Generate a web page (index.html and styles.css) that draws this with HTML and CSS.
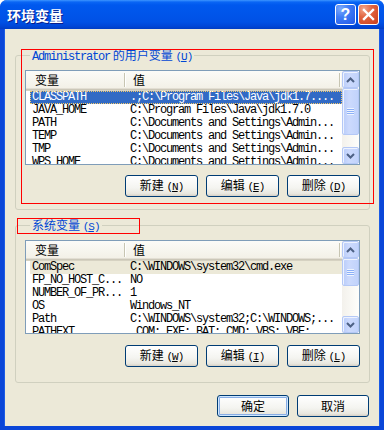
FILE: index.html
```html
<!DOCTYPE html>
<html lang="zh-CN">
<head>
<meta charset="utf-8">
<title>环境变量</title>
<link rel="stylesheet" href="styles.css">
</head>
<body>
<div class="window">
  <div class="titlebar">
    <span class="title">环境变量</span>
    <div class="tb-buttons">
      <span class="tb-btn help">?</span>
      <span class="tb-btn close"><svg width="21" height="21" viewBox="0 0 21 21"><path d="M6 6 L15 15 M15 6 L6 15" stroke="#fff" stroke-width="2.4" stroke-linecap="square" fill="none"/></svg></span>
    </div>
  </div>
  <div class="frame">
    <fieldset class="group group-user">
      <legend><span class="mono">Administrator</span> 的用户变量 <span class="mn">(<u>U</u>)</span></legend>
      <div class="list list-user">
        <div class="list-main">
          <div class="list-header">
            <div class="hcell hname">变量</div>
            <span class="sep"></span>
            <div class="hcell hvalue">值</div>
            <span class="sep sep-end"></span>
          </div>
          <div class="rows">
            <div class="row selected"><span class="cell name">CLASSPATH</span><span class="cell value">.;C:\Program Files\Java\jdk1.7....</span></div>
            <div class="row"><span class="cell name">JAVA_HOME</span><span class="cell value">C:\Program Files\Java\jdk1.7.0</span></div>
            <div class="row"><span class="cell name">PATH</span><span class="cell value">C:\Documents and Settings\Admin...</span></div>
            <div class="row"><span class="cell name">TEMP</span><span class="cell value">C:\Documents and Settings\Admin...</span></div>
            <div class="row"><span class="cell name">TMP</span><span class="cell value">C:\Documents and Settings\Admin...</span></div>
            <div class="row"><span class="cell name">WPS_HOME</span><span class="cell value">C:\Documents and Settings\Admin...</span></div>
          </div>
        </div>
        <div class="scrollbar">
          <div class="sb-btn"><svg width="9" height="6" viewBox="0 0 9 6"><path d="M1 5 L4.5 1.5 L8 5" stroke="#4D6185" stroke-width="2" fill="none"/></svg></div>
          <div class="sb-thumb thumb-user"><span class="grip"></span></div>
          <div class="sb-track"></div>
          <div class="sb-btn"><svg width="9" height="6" viewBox="0 0 9 6"><path d="M1 1 L4.5 4.5 L8 1" stroke="#4D6185" stroke-width="2" fill="none"/></svg></div>
        </div>
      </div>
      <div class="btn-row">
        <button class="btn">新建 <span class="mn">(<u>N</u>)</span></button>
        <button class="btn">编辑 <span class="mn">(<u>E</u>)</span></button>
        <button class="btn">删除 <span class="mn">(<u>D</u>)</span></button>
      </div>
    </fieldset>

    <fieldset class="group group-sys">
      <legend>系统变量 <span class="mn">(<u>S</u>)</span></legend>
      <div class="list list-sys">
        <div class="list-main">
          <div class="list-header">
            <div class="hcell hname">变量</div>
            <span class="sep"></span>
            <div class="hcell hvalue">值</div>
            <span class="sep sep-end"></span>
          </div>
          <div class="rows">
            <div class="row inactive"><span class="cell name">ComSpec</span><span class="cell value">C:\WINDOWS\system32\cmd.exe</span></div>
            <div class="row"><span class="cell name">FP_NO_HOST_C...</span><span class="cell value">NO</span></div>
            <div class="row"><span class="cell name">NUMBER_OF_PR...</span><span class="cell value">1</span></div>
            <div class="row"><span class="cell name">OS</span><span class="cell value">Windows_NT</span></div>
            <div class="row"><span class="cell name">Path</span><span class="cell value">C:\WINDOWS\system32;C:\WINDOWS;...</span></div>
            <div class="row"><span class="cell name">PATHEXT</span><span class="cell value">.COM;.EXE;.BAT;.CMD;.VBS;.VBE;...</span></div>
          </div>
        </div>
        <div class="scrollbar">
          <div class="sb-btn"><svg width="9" height="6" viewBox="0 0 9 6"><path d="M1 5 L4.5 1.5 L8 5" stroke="#4D6185" stroke-width="2" fill="none"/></svg></div>
          <div class="sb-thumb thumb-sys"><span class="grip"></span></div>
          <div class="sb-track"></div>
          <div class="sb-btn"><svg width="9" height="6" viewBox="0 0 9 6"><path d="M1 1 L4.5 4.5 L8 1" stroke="#4D6185" stroke-width="2" fill="none"/></svg></div>
        </div>
      </div>
      <div class="btn-row">
        <button class="btn">新建 <span class="mn">(<u>W</u>)</span></button>
        <button class="btn">编辑 <span class="mn">(<u>I</u>)</span></button>
        <button class="btn">删除 <span class="mn">(<u>L</u>)</span></button>
      </div>
    </fieldset>

    <div class="dialog-buttons">
      <button class="btn btn-dlg default">确定</button>
      <button class="btn btn-dlg">取消</button>
    </div>
  </div>
  <div class="annot annot-user"></div>
  <div class="annot annot-sys"></div>
</div>
</body>
</html>
```

FILE: styles.css
```css
* { box-sizing: border-box; }
html, body { margin: 0; padding: 0; background: #fff; }
body {
  font-family: "Noto Sans CJK SC", "Liberation Sans", sans-serif;
  font-size: 12px;
  color: #000;
}
.window {
  position: relative;
  width: 384px;
  height: 430px;
  display: flex;
  flex-direction: column;
  border-radius: 7px 7px 0 0;
  overflow: hidden;
  background: #0A46D8;
}
.titlebar {
  height: 29px;
  flex: none;
  display: flex;
  align-items: center;
  justify-content: space-between;
  padding: 0 5px 0 7px;
  background: linear-gradient(#3D95FF 0px, #0A66F5 2px, #0058EE 5px, #0055EA 14px, #0051E5 22px, #0047D8 26px, #003DC4 29px);
}
.title {
  color: #fff;
  font-weight: bold;
  font-size: 14px;
  line-height: 16px;
  text-shadow: 1px 1px 0 #0A1E8C;
}
.tb-buttons { display: flex; gap: 2px; }
.tb-btn {
  width: 21px;
  height: 21px;
  border: 1px solid #fff;
  border-radius: 3px;
  display: flex;
  align-items: center;
  justify-content: center;
}
.tb-btn svg { display: block; margin: -1px; }
.help {
  background: radial-gradient(circle at 25% 20%, #7EAAFB 0, #3F7CF6 40%, #2257E7 100%);
  color: #fff;
  font-family: "Liberation Sans", sans-serif;
  font-weight: bold;
  font-size: 16px;
  line-height: 17px;
}
.close {
  background: radial-gradient(circle at 25% 20%, #F3A78C 0, #E2643F 40%, #C93E1C 100%);
}
.frame {
  flex: 1;
  background: #ECE9D8;
  border: 4px solid #0A46D8;
  border-top: 0;
  box-shadow: inset 1px 0 0 #1C5CE6, inset -1px 0 0 #1C5CE6;
  display: flex;
  flex-direction: column;
  padding: 0 10px 0 11px;
}
.group {
  margin: 0;
  border: 1px solid #D0D0BF;
  border-radius: 3px;
  padding: 8px 9px 12px 9px;
  min-width: 0;
}
.group-user { margin-top: 19px; }
.group-sys { margin-top: 8px; padding-bottom: 15px; }
.group legend {
  color: #0046D5;
  line-height: 14px;
  height: 14px;
  padding: 0 2px;
  margin-left: 5px;
  font-size: 12px;
  white-space: nowrap;
}
.mono {
  font-family: "Liberation Mono", monospace;
  font-size: 12px;
  letter-spacing: -1.2px;
}
.mn {
  font-family: "Liberation Mono", monospace;
  font-size: 11px;
  letter-spacing: -1px;
}
.mn u { text-underline-offset: 1px; }
.list {
  display: flex;
  border: 1px solid #7F9DB9;
  background: #fff;
  overflow: hidden;
}
.list-user { height: 95px; }
.list-sys { height: 94px; }
.list-main { flex: 1; min-width: 0; overflow: hidden; }
.list-header {
  display: flex;
  align-items: center;
  height: 20px;
  background: linear-gradient(#FBFBF8, #F1EFE4);
  box-shadow: inset 0 -1px #D6D2C2, inset 0 -2px #CBC7B8, inset 0 -3px #E2DED3;
  padding-bottom: 2px;
}
.hcell { line-height: 16px; }
.hname { width: 98px; padding-left: 9px; }
.hvalue { flex: 1; padding-left: 8px; }
.sep {
  width: 1px;
  height: 14px;
  background: #C7C5B2;
  box-shadow: 1px 0 0 #fff;
  flex: none;
}
.sep-end { margin-right: 2px; }
.row {
  display: flex;
  height: 13px;
  line-height: 13px;
  margin-left: 4px;
  font-family: "Liberation Mono", monospace;
  font-size: 12px;
  letter-spacing: -1.2px;
  white-space: nowrap;
}
.cell.name { width: 94px; padding-left: 2px; flex: none; overflow: hidden; }
.cell.value { padding-left: 6px; }
.row.selected {
  background: #316AC5;
  color: #fff;
  outline: 1px dotted #F2C86A;
  outline-offset: -1px;
}
.row.inactive { background: #ECE9D8; }
.scrollbar {
  width: 17px;
  flex: none;
  display: flex;
  flex-direction: column;
  background: linear-gradient(90deg, #F3F1EC, #FEFEFB);
}
.sb-btn, .sb-thumb {
  border: 1px solid #B4C8F6;
  border-radius: 2px;
  background: linear-gradient(90deg, #B9CCF9, #CCDAFD 40%, #C1D3FB);
  box-shadow: inset 1px 1px 0 #EEF3FE;
  display: flex;
  align-items: center;
  justify-content: center;
  flex: none;
}
.sb-btn { height: 17px; }
.thumb-user { height: 47px; }
.thumb-sys { height: 28px; }
.sb-track { flex: 1; }
.grip {
  width: 7px;
  height: 7px;
  background: repeating-linear-gradient(#EEF4FE 0 1px, #8CB0F8 1px 2px);
}
.btn-row {
  display: flex;
  justify-content: flex-end;
  gap: 8px;
  margin-top: 10px;
}
.group-sys .btn-row { margin-top: 11px; }
.btn {
  width: 73px;
  height: 22px;
  padding: 0;
  border: 1px solid #003C74;
  border-radius: 3px;
  background: linear-gradient(#FFFFFF, #F4F4F0 60%, #E8E7DF 88%, #D6D0C5);
  font-family: "Noto Sans CJK SC", sans-serif;
  font-size: 12px;
  line-height: 18px;
  color: #000;
  white-space: nowrap;
}
.dialog-buttons {
  display: flex;
  justify-content: flex-end;
  gap: 8px;
  margin-top: 12px;
  padding-right: 1px;
}
.btn-dlg { width: 72px; }
.btn.default {
  box-shadow: inset 0 0 0 1px #CEE7FF, inset 0 0 0 2px #89ADE4;
}
.annot {
  position: absolute;
  border: 1px solid #FF0000;
  pointer-events: none;
}
.annot-user { left: 21px; top: 49px; width: 353px; height: 155px; }
.annot-sys { left: 17px; top: 218px; width: 123px; height: 16px; }
```
